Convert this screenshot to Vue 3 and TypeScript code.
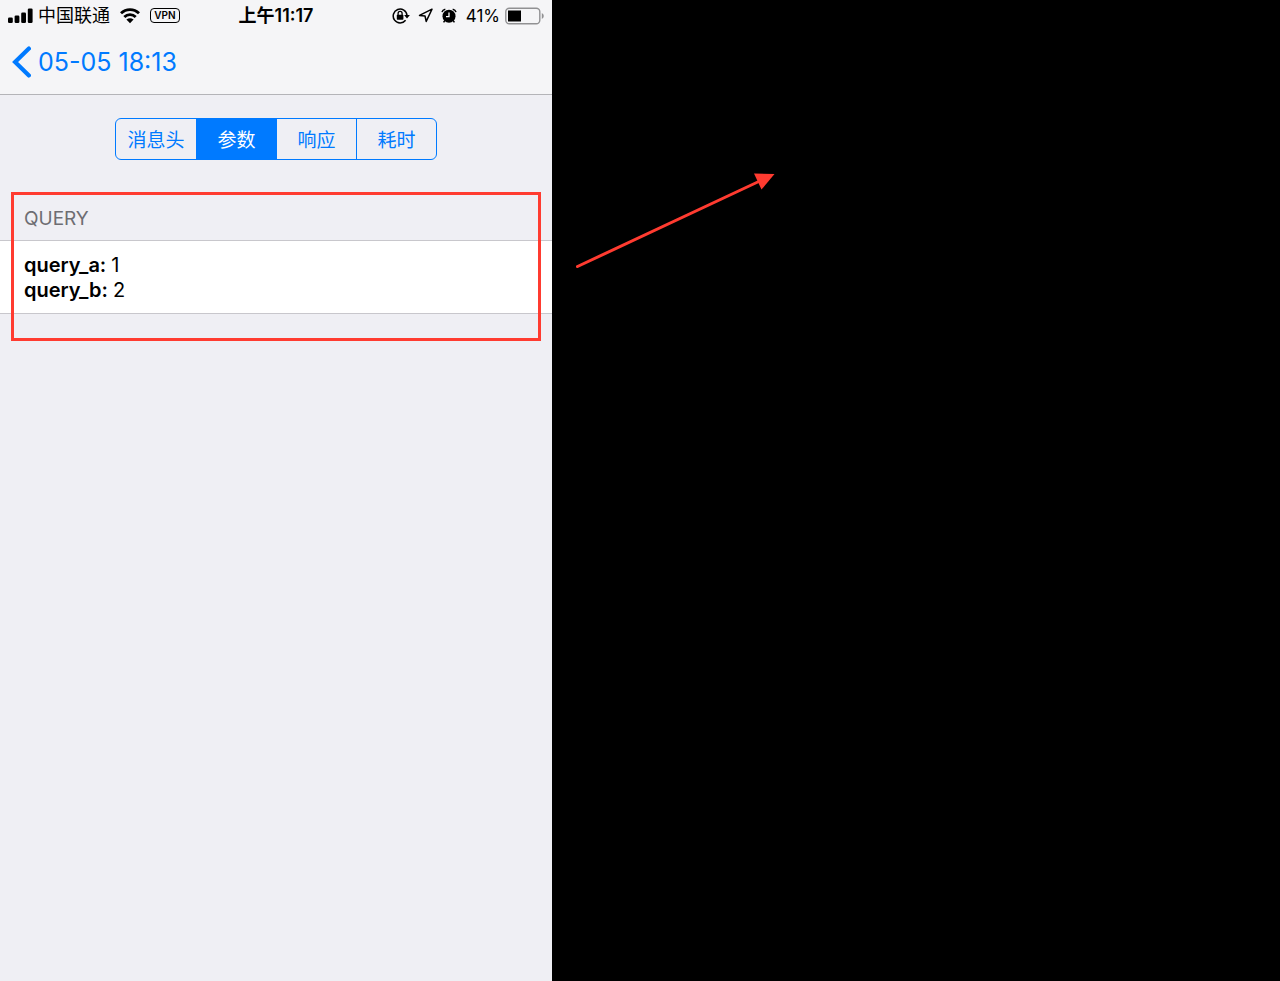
<script setup lang="ts">
import { ref } from 'vue'

interface Param {
  name: string
  value: string
}

const tabs: string[] = ['消息头', '参数', '响应', '耗时']
const active = ref<number>(1)
const params: Param[] = [
  { name: 'query_a', value: '1' },
  { name: 'query_b', value: '2' },
]
</script>

<template>
  <div class="stage">
    <main class="phone">
      <header class="top">
        <div class="status">
          <div class="status-left">
            <svg width="25" height="16" viewBox="0 0 25 16" aria-hidden="true">
              <rect x="0" y="9.5" width="4.8" height="5.5" rx="1.3" />
              <rect x="6.6" y="7.5" width="4.8" height="7.5" rx="1.3" />
              <rect x="13.2" y="4.5" width="4.8" height="10.5" rx="1.3" />
              <rect x="19.8" y="0.5" width="4.8" height="14.5" rx="1.3" />
            </svg>
            <span class="carrier">中国联通</span>
            <svg width="20" height="16" viewBox="0 0 20 16" aria-hidden="true">
              <g fill="none" stroke="#000" stroke-width="2.8">
                <path d="M1 5.3C6 .3 14 .3 19 5.3" />
                <path d="M4.3 9C7.5 5.8 12.5 5.8 15.7 9" />
              </g>
              <path d="M10 15.2L6.4 11.6Q10 8.8 13.6 11.6Z" />
            </svg>
            <span class="vpn">VPN</span>
          </div>
          <span class="clock">上午11:17</span>
          <div class="status-right">
            <svg width="18" height="18" viewBox="0 0 18 18" aria-hidden="true">
              <path d="M13.6 13.2A6.9 6.9 0 1 1 15 8.4" fill="none" stroke="#000" stroke-width="1.5" />
              <path d="M12.1 7.9H17.9L15 11.6Z" />
              <rect x="4.8" y="7.8" width="6.6" height="4.9" rx=".6" />
              <path d="M6.1 8.3V6.4a2 2 0 0 1 4 0V8.3" fill="none" stroke="#000" stroke-width="1.3" />
            </svg>
            <svg class="icon" width="15" height="15" viewBox="0 0 15 15" aria-hidden="true">
              <path d="M14 1.2L1.5 7.4L7 8L8.2 13.4Z" fill="none" stroke="#000" stroke-width="1.5" stroke-linejoin="round" />
            </svg>
            <svg class="icon" width="16" height="16" viewBox="0 0 16 16" aria-hidden="true">
              <circle cx="8" cy="8.2" r="6.5" />
              <path d="M3.9 12.4L2.6 14.4M12.1 12.4L13.4 14.4M1 4.1Q1.6 1.8 4.3 1.2M15 4.1Q14.4 1.8 11.7 1.2" fill="none" stroke="#000" stroke-width="1.5" />
              <path d="M8 4.5V8.6H5" fill="none" stroke="#fff" stroke-width="1.3" />
            </svg>
            <span class="percent">41%</span>
            <svg width="39" height="18" viewBox="0 0 39 18" aria-hidden="true">
              <rect x=".8" y="1.3" width="34" height="15.4" rx="3.5" fill="none" stroke="#919193" stroke-width="1.4" />
              <rect x="3" y="3.5" width="13" height="11" />
              <path d="M36.8 6Q38.8 7 38.8 9T36.8 12Z" fill="#919193" />
            </svg>
          </div>
        </div>
        <nav class="nav">
          <button class="back" type="button">
            <svg width="20" height="32" viewBox="0 0 20 32" aria-hidden="true">
              <path d="M17.9 2.6L4.1 16L17.9 29.4" fill="none" stroke="#007aff" stroke-width="4.2" stroke-linecap="round" stroke-linejoin="miter" />
            </svg>
            <span>05-05 18:13</span>
          </button>
        </nav>
      </header>

      <div class="segments" role="tablist">
        <button
          v-for="(tab, i) in tabs"
          :key="tab"
          class="segment"
          :class="{ selected: active === i }"
          type="button"
          role="tab"
          :aria-selected="active === i"
          @click="active = i"
        >{{ tab }}</button>
      </div>

      <section class="group">
        <h2 class="heading">QUERY</h2>
        <dl class="params">
          <div v-for="param in params" :key="param.name" class="param">
            <dt>{{ param.name }}:</dt>
            <dd>{{ param.value }}</dd>
          </div>
        </dl>
        <div class="highlight"></div>
      </section>
    </main>

    <aside class="canvas">
      <svg class="arrow" width="200" height="98" viewBox="0 0 200 98" aria-hidden="true">
        <path d="M1.5 94.5L186 8" fill="none" stroke="#ff3b30" stroke-width="3" stroke-linecap="round" />
        <path d="M178 1.5L198.5 2L185.5 17.5Z" fill="#ff3b30" />
      </svg>
    </aside>
  </div>
</template>

<style>
body {
  background: #000;
}
</style>

<style scoped>
.stage {
  display: grid;
  grid-template-columns: 69fr 91fr;
  min-height: 100vh;
  font-family: Inter, "Noto Sans CJK SC", sans-serif;
  color: #000;
}

.phone {
  background: #efeff4;
}

.top {
  background: #f5f5f7;
  border-bottom: 1px solid #b4b4b8;
}

.status {
  display: grid;
  grid-template-columns: 1fr auto 1fr;
  align-items: center;
  height: 30px;
  padding: 0 8px;
  font-size: 17px;
  line-height: 30px;
}

.status-left,
.status-right {
  display: flex;
  align-items: center;
  white-space: nowrap;
}

.status-right {
  justify-content: flex-end;
}

.carrier {
  margin: 0 10px 0 5px;
  padding-top: 1px;
  font-size: 18px;
}

.vpn {
  box-sizing: border-box;
  width: 30px;
  height: 15px;
  margin-left: 10px;
  border: 1px solid #000;
  border-radius: 4px;
  font-size: 10px;
  font-weight: 600;
  line-height: 13px;
  text-align: center;
}

.clock {
  font-size: 18px;
  font-weight: 600;
}

.icon {
  margin-left: 8px;
}

.percent {
  margin: 0 5px 0 9px;
}

.nav {
  display: flex;
  align-items: center;
  height: 64px;
  padding-left: 11px;
}

.back {
  display: flex;
  align-items: center;
  gap: 7px;
  padding: 0;
  border: 0;
  background: none;
  color: #007aff;
  font: inherit;
  font-size: 25px;
  line-height: 32px;
}

.segments {
  display: grid;
  grid-template-columns: repeat(4, 1fr);
  box-sizing: border-box;
  width: 322px;
  height: 42px;
  margin: 23px auto 0;
  overflow: hidden;
  border: 1px solid #007aff;
  border-radius: 6px;
}

.segment {
  padding: 0 0 2px;
  border: 0;
  background: none;
  color: #007aff;
  font: inherit;
  font-size: 19px;
}

.segment + .segment {
  border-left: 1px solid #007aff;
}

.segment.selected {
  background: #007aff;
  color: #fff;
}

.group {
  position: relative;
  margin-top: 32px;
}

.heading {
  margin: 0;
  padding: 15px 24px 9px;
  color: #6d6d72;
  font-size: 19px;
  font-weight: 400;
  line-height: 24px;
}

.params {
  margin: 0;
  padding: 12px 24px 10px;
  border: solid #c8c7cc;
  border-width: 1px 0;
  background: #fff;
  font-size: 20px;
  line-height: 25px;
}

.param {
  display: flex;
  gap: 5px;
}

.param dt {
  font-weight: 600;
}

.param dd {
  margin: 0;
}

.highlight {
  position: absolute;
  inset: 0 11px -27px;
  border: 3px solid #ff3b30;
}

.canvas {
  padding: 172px 0 0 24px;
  background: #000;
}

.arrow {
  display: block;
}
</style>
